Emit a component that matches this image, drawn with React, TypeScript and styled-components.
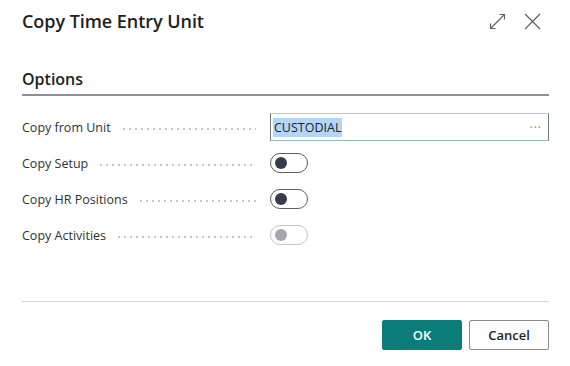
import React from "react";
import styled, { createGlobalStyle } from "styled-components";

const GlobalStyle = createGlobalStyle`
  html, body {
    margin: 0;
    padding: 0;
    background: #ffffff;
  }
  body {
    font-family: "Open Sans", "Noto Sans", sans-serif;
    color: #201f1e;
  }
`;

type Field = {
  label: string;
  kind: "lookup" | "toggle";
  value?: string;
  disabled?: boolean;
};

const fields: Field[] = [
  { label: "Copy from Unit", kind: "lookup", value: "CUSTODIAL" },
  { label: "Copy Setup", kind: "toggle" },
  { label: "Copy HR Positions", kind: "toggle" },
  { label: "Copy Activities", kind: "toggle", disabled: true },
];

const Dialog = styled.div`
  width: 570px;
  height: 366px;
  display: flex;
  flex-direction: column;
  box-sizing: border-box;
  padding: 0 21px 16px 22px;
`;

const Header = styled.div`
  display: flex;
  justify-content: space-between;
  align-items: center;
  height: 42px;
`;

const Title = styled.h1`
  margin: 0;
  font-size: 18px;
  font-weight: 600;
  letter-spacing: -0.05px;
`;

const HeaderActions = styled.div`
  display: flex;
  align-items: center;
  gap: 18px;
  margin-right: 8px;
  color: #605e5c;
`;

const IconButton = styled.button`
  padding: 0;
  border: none;
  background: transparent;
  color: inherit;
  display: flex;
  cursor: pointer;
`;

const SectionHeading = styled.h2`
  margin: 26px 0 0 0;
  font-size: 16px;
  line-height: 22px;
  font-weight: 600;
  padding-bottom: 4px;
  border-bottom: 2px solid #8f8e99;
`;

const FieldList = styled.div`
  display: flex;
  flex-direction: column;
  margin-top: 13px;
`;

const Row = styled.div`
  display: flex;
  align-items: center;
  height: 36px;
`;

const LabelCell = styled.div`
  width: 234px;
  display: flex;
  align-items: center;
  margin-right: 14px;
  font-size: 12.5px;
  color: #323130;
`;

const Leader = styled.span`
  flex: 1;
  height: 2px;
  margin: 3px 0 0 10px;
  background-image: radial-gradient(circle, #c8c6c4 0.8px, transparent 1px);
  background-size: 6px 2px;
  background-repeat: repeat-x;
`;

const Lookup = styled.div`
  flex: 1;
  height: 28px;
  box-sizing: border-box;
  display: flex;
  align-items: center;
  justify-content: space-between;
  padding: 0 6px 0 2px;
  border: 1px solid #6f7b7b;
  border-top-color: #9fd4d1;
  border-bottom-color: #8fbfbd;
  font-size: 12.5px;
`;

const Selected = styled.span`
  background: #b5d5f7;
  padding: 1px 1px;
  color: #201f1e;
`;

const More = styled.span`
  color: #8a8886;
  font-size: 12px;
  letter-spacing: 1px;
`;

const Toggle = styled.span<{ $disabled?: boolean }>`
  width: 38px;
  height: 20px;
  box-sizing: border-box;
  border-radius: 10px;
  border: 1px solid ${(p) => (p.$disabled ? "#c8c6c4" : "#605e5c")};
  display: flex;
  align-items: center;
  padding-left: 4px;

  &::before {
    content: "";
    width: 12px;
    height: 12px;
    border-radius: 50%;
    background: ${(p) => (p.$disabled ? "#a7a6ad" : "#393d4b")};
  }
`;

const Spacer = styled.div`
  flex: 1;
`;

const Footer = styled.div`
  border-top: 1px solid #d6d4d2;
  padding-top: 18px;
  display: flex;
  justify-content: flex-end;
  gap: 7px;
`;

const Button = styled.button<{ $primary?: boolean }>`
  width: 80px;
  height: 30px;
  box-sizing: border-box;
  font-family: inherit;
  font-size: 13px;
  font-weight: 600;
  border-radius: 2px;
  border: 1px solid ${(p) => (p.$primary ? "#0b7c78" : "#8a8886")};
  background: ${(p) => (p.$primary ? "#0b7c78" : "#ffffff")};
  color: ${(p) => (p.$primary ? "#ffffff" : "#201f1e")};
  cursor: pointer;
`;

const ExpandIcon = () => (
  <svg width="17" height="17" viewBox="0 0 17 17" fill="none" stroke="currentColor" strokeWidth="1.1">
    <path d="M1.5 15.5 L15.5 1.5" />
    <path d="M10.5 1.5 H15.5 V6.5" />
    <path d="M1.5 10.5 V15.5 H6.5" />
  </svg>
);

const CloseIcon = () => (
  <svg width="17" height="17" viewBox="0 0 17 17" fill="none" stroke="currentColor" strokeWidth="1.2">
    <path d="M1 1 L16 16 M16 1 L1 16" />
  </svg>
);

export default function App() {
  return (
    <>
      <GlobalStyle />
      <Dialog>
        <Header>
          <Title>Copy Time Entry Unit</Title>
          <HeaderActions>
            <IconButton aria-label="Expand">
              <ExpandIcon />
            </IconButton>
            <IconButton aria-label="Close">
              <CloseIcon />
            </IconButton>
          </HeaderActions>
        </Header>
        <SectionHeading>Options</SectionHeading>
        <FieldList>
          {fields.map((f) => (
            <Row key={f.label}>
              <LabelCell>
                {f.label}
                <Leader />
              </LabelCell>
              {f.kind === "lookup" ? (
                <Lookup>
                  <Selected>{f.value}</Selected>
                  <More>···</More>
                </Lookup>
              ) : (
                <Toggle $disabled={f.disabled} />
              )}
            </Row>
          ))}
        </FieldList>
        <Spacer />
        <Footer>
          <Button $primary>OK</Button>
          <Button>Cancel</Button>
        </Footer>
      </Dialog>
    </>
  );
}
